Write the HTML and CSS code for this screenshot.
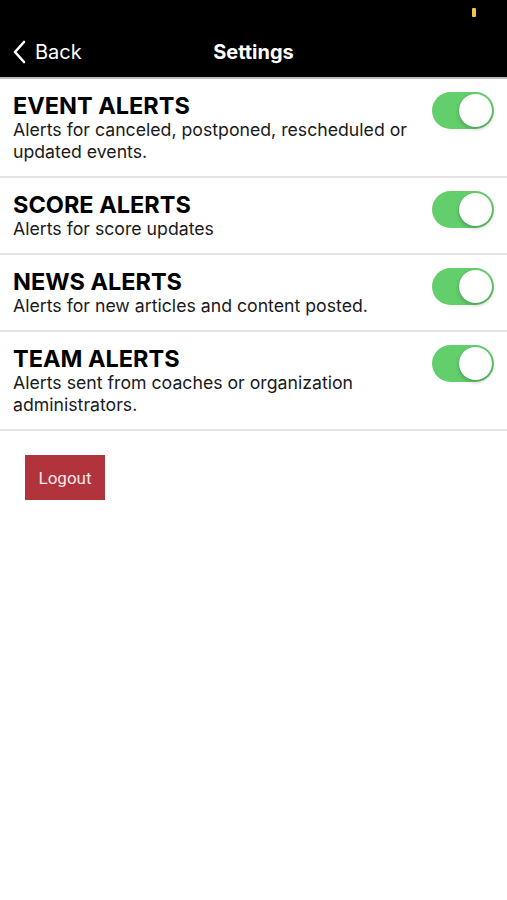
FILE: index.html
```html
<!DOCTYPE html>
<html lang="en">
<head>
    <meta charset="UTF-8">
    <meta name="viewport" content="width=device-width, initial-scale=1.0">
    <title>Settings</title>
    <link rel="stylesheet" href="styles.css">
</head>
<body>
 <div id="topo">
    <div class="status"><span class="bateria"></span></div>
    <div class="barra">
        <a class="voltar">
            <svg width="14" height="24" viewBox="0 0 14 24"><path d="M12 2 L3 12 L12 22" fill="none" stroke="#fff" stroke-width="2.6" stroke-linecap="round" stroke-linejoin="round"/></svg>
            <span>Back</span>
        </a>
        <h1 class="titulo">Settings</h1>
    </div>
 </div>

 <ul id="alertas">
    <li class="alerta">
        <div class="texto">
            <h2>EVENT ALERTS</h2>
            <p>Alerts for canceled, postponed, rescheduled or updated events.</p>
        </div>
        <span class="chave"></span>
    </li>
    <li class="alerta">
        <div class="texto">
            <h2>SCORE ALERTS</h2>
            <p>Alerts for score updates</p>
        </div>
        <span class="chave"></span>
    </li>
    <li class="alerta">
        <div class="texto">
            <h2>NEWS ALERTS</h2>
            <p>Alerts for new articles and content posted.</p>
        </div>
        <span class="chave"></span>
    </li>
    <li class="alerta">
        <div class="texto">
            <h2>TEAM ALERTS</h2>
            <p>Alerts sent from coaches or organization administrators.</p>
        </div>
        <span class="chave"></span>
    </li>
 </ul>

 <div id="sair">
    <button class="logout">Logout</button>
 </div>
</body>
</html>
```

FILE: styles.css
```css
* {
    box-sizing: border-box;
}

body {
    margin: 0;
    background-color: #fff;
    font-family: Inter, "Liberation Sans", Arial, sans-serif;
    color: #111;
}

#topo {
    background-color: #000;
    color: #fff;
    border-bottom: 2px solid #bdbdbd;
}

.status {
    height: 24px;
    display: flex;
    justify-content: flex-end;
    padding: 8px 31px 0 0;
}
.bateria {
    width: 4px;
    height: 9px;
    background-color: #f5c542;
    border-radius: 1px;
}

.barra {
    height: 53px;
    position: relative;
    display: flex;
    align-items: center;
    justify-content: center;
    padding-top: 2px;
}

.voltar {
    position: absolute;
    left: 12px;
    top: 16px;
    display: flex;
    align-items: center;
    gap: 9px;
    font-size: 20px;
}

.titulo {
    margin: 0;
    font-size: 20px;
    font-weight: 700;
}

#alertas {
    list-style: none;
    margin: 0;
    padding: 0;
}

.alerta {
    display: flex;
    align-items: flex-start;
    justify-content: space-between;
    padding: 14px 13px 13px 13px;
    border-bottom: 2px solid #e4e4e4;
}

.texto h2 {
    margin: 0;
    font-size: 23.5px;
    line-height: 26px;
    font-weight: 700;
    color: #000;
}
.texto p {
    margin: 0;
    font-size: 17.7px;
    line-height: 22px;
    color: #1a1a1a;
    max-width: 410px;
}

.chave {
    position: relative;
    flex-shrink: 0;
    width: 62px;
    height: 37px;
    border-radius: 19px;
    background-color: #62cf6c;
    margin: -1px 0 0 12px;
}
.chave::after {
    content: "";
    position: absolute;
    top: 2px;
    right: 2px;
    width: 33px;
    height: 33px;
    border-radius: 50%;
    background-color: #fff;
    box-shadow: 0 2px 4px rgba(0, 0, 0, .25);
}

#sair {
    padding: 24px 25px;
}

.logout {
    border: none;
    border-radius: 0;
    background-color: #b1343d;
    color: #fde6e6;
    font-family: Roboto, "Liberation Sans", sans-serif;
    font-size: 17px;
    width: 80px;
    height: 45px;
    padding: 0;
}
```
